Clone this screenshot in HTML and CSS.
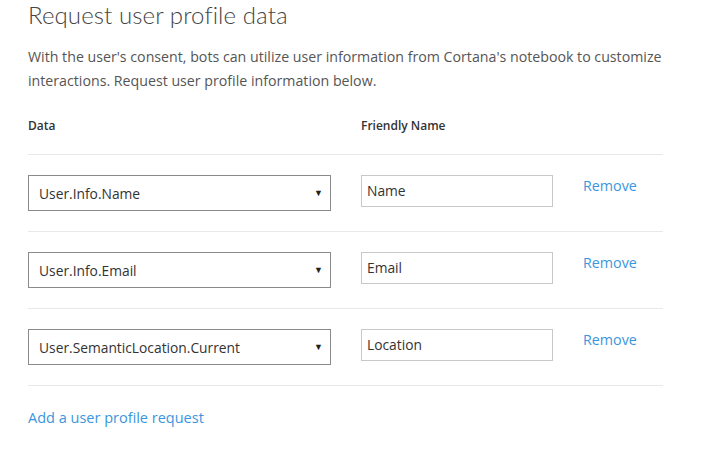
FILE: index.html
```html
<!DOCTYPE html>
<html>
<head>
<meta charset="utf-8">
<link rel="stylesheet" href="styles.css">
</head>
<body>
<div class="page">
  <h1 class="title">Request user profile data</h1>
  <p class="intro">With the user's consent, bots can utilize user information from Cortana's notebook to customize interactions. Request user profile information below.</p>
  <div class="table">
    <div class="head">
      <div class="col-data">Data</div>
      <div class="col-name">Friendly Name</div>
    </div>
    <div class="row">
      <div class="col-data"><div class="select"><span>User.Info.Name</span><span class="caret">▼</span></div></div>
      <div class="col-name"><div class="input">Name</div></div>
      <a class="remove">Remove</a>
    </div>
    <div class="row">
      <div class="col-data"><div class="select"><span>User.Info.Email</span><span class="caret">▼</span></div></div>
      <div class="col-name"><div class="input">Email</div></div>
      <a class="remove">Remove</a>
    </div>
    <div class="row">
      <div class="col-data"><div class="select"><span>User.SemanticLocation.Current</span><span class="caret">▼</span></div></div>
      <div class="col-name"><div class="input">Location</div></div>
      <a class="remove">Remove</a>
    </div>
  </div>
  <a class="add">Add a user profile request</a>
</div>
</body>
</html>
```
FILE: styles.css
```css
html, body {
  margin: 0;
  padding: 0;
  background: #fff;
}
body {
  font-family: "Open Sans", "Noto Sans", sans-serif;
  color: #333;
}
.page {
  padding: 0 0 0 28px;
  width: 635px;
}
.title {
  margin: 0;
  font-family: Lato, "Open Sans", sans-serif;
  font-size: 24px;
  font-weight: 300;
  line-height: 29px;
  color: #444;
  letter-spacing: 0.1px;
}
.intro {
  margin: 16px 0 0 0;
  font-size: 14.2px;
  line-height: 24px;
  color: #555;
}
.table {
  margin-top: 21px;
}
.head {
  display: flex;
  gap: 30px;
  font-size: 12px;
  font-weight: 600;
  color: #333;
  height: 40px;
  line-height: 24px;
  border-bottom: 1px solid #e8e8e8;
}
.col-data {
  width: 303px;
}
.col-name {
  width: 192px;
}
.row {
  display: flex;
  gap: 30px;
  align-items: flex-start;
  padding: 20px 0;
  border-bottom: 1px solid #e8e8e8;
}
.select {
  box-sizing: border-box;
  height: 36px;
  border: 1px solid #8a8a8a;
  display: flex;
  align-items: center;
  justify-content: space-between;
  padding: 0 7px 0 10px;
  font-size: 13.8px;
  color: #333;
}
.caret {
  font-size: 9px;
  color: #222;
  margin-top: -2px;
}
.input {
  box-sizing: border-box;
  height: 32px;
  border: 1px solid #c8c8c8;
  padding: 0 5px;
  font-size: 13.8px;
  line-height: 30px;
  color: #333;
}
.remove {
  font-size: 14.3px;
  color: #3a96dd;
  line-height: 20px;
  margin-top: 1px;
  cursor: pointer;
}
.add {
  display: inline-block;
  margin-top: 22px;
  font-size: 14.5px;
  color: #3a96dd;
  line-height: 20px;
  cursor: pointer;
}
```
